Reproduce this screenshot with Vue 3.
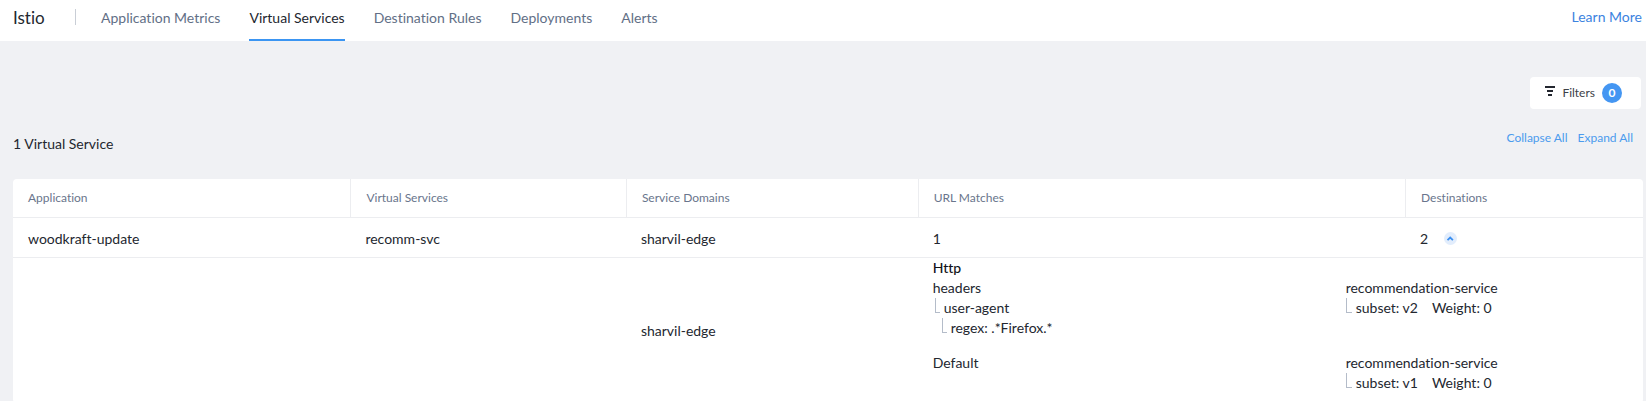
<script setup>
import { ref } from 'vue'

const tabs = ['Application Metrics', 'Virtual Services', 'Destination Rules', 'Deployments', 'Alerts']
const activeTab = ref('Virtual Services')
const columns = ['Application', 'Virtual Services', 'Service Domains', 'URL Matches', 'Destinations']
const expanded = ref(true)
const filterCount = ref(0)

const service = {
  application: 'woodkraft-update',
  name: 'recomm-svc',
  domain: 'sharvil-edge',
  matches: 1,
  destinations: 2,
}

const routes = [
  {
    protocol: 'Http',
    match: 'headers',
    children: ['user-agent', 'regex: .*Firefox.*'],
    host: 'recommendation-service',
    subset: 'v2',
    weight: 0,
  },
  {
    match: 'Default',
    children: [],
    host: 'recommendation-service',
    subset: 'v1',
    weight: 0,
  },
]
</script>

<template>
  <div class="page">
    <header class="topbar">
      <h1 class="brand">Istio</h1>
      <span class="separator"></span>
      <nav class="tabs">
        <a
          v-for="tab in tabs"
          :key="tab"
          href="#"
          class="tab"
          :class="{ active: tab === activeTab }"
          @click.prevent="activeTab = tab"
        >{{ tab }}</a>
      </nav>
      <a href="#" class="learn">Learn More</a>
    </header>

    <main class="content">
      <div class="toolbar">
        <button type="button" class="filters">
          <svg width="10" height="10" viewBox="0 0 10 10" aria-hidden="true">
            <path d="M0 1h10M2 5h6M3 9h4" stroke="#23272f" stroke-width="2" fill="none" />
          </svg>
          <span>Filters</span>
          <span class="badge">{{ filterCount }}</span>
        </button>
      </div>

      <div class="summary">
        <h2 class="count">1 Virtual Service</h2>
        <div class="actions">
          <button type="button" class="action" @click="expanded = false">Collapse All</button>
          <button type="button" class="action" @click="expanded = true">Expand All</button>
        </div>
      </div>

      <table class="services">
        <colgroup>
          <col class="col-app" />
          <col class="col-service" />
          <col class="col-domain" />
          <col class="col-match" />
          <col />
        </colgroup>
        <thead>
          <tr>
            <th v-for="column in columns" :key="column" scope="col">{{ column }}</th>
          </tr>
        </thead>
        <tbody>
          <tr class="row">
            <td>{{ service.application }}</td>
            <td>{{ service.name }}</td>
            <td>{{ service.domain }}</td>
            <td>{{ service.matches }}</td>
            <td>
              <div class="destinations">
                <span>{{ service.destinations }}</span>
                <button
                  type="button"
                  class="toggle"
                  aria-label="Toggle details"
                  :aria-expanded="expanded"
                  @click="expanded = !expanded"
                >
                  <svg width="13" height="13" viewBox="0 0 13 13" aria-hidden="true">
                    <path d="M3.5 8.2L6.2 5.6L8.9 8.2" stroke="#3b8ff0" stroke-width="1.8" fill="none" />
                  </svg>
                </button>
              </div>
            </td>
          </tr>
          <tr v-if="expanded" class="detail">
            <td></td>
            <td></td>
            <td>{{ service.domain }}</td>
            <td colspan="2">
              <div v-for="route in routes" :key="route.subset" class="route">
                <div>
                  <div v-if="route.protocol" class="protocol">{{ route.protocol }}</div>
                  <div>{{ route.match }}</div>
                  <div
                    v-for="(child, depth) in route.children"
                    :key="child"
                    class="branch"
                    :class="{ nested: depth > 0 }"
                  >{{ child }}</div>
                </div>
                <div :class="{ offset: route.protocol }">
                  <div>{{ route.host }}</div>
                  <div class="branch target">
                    <span>subset: {{ route.subset }}</span>
                    <span>Weight: {{ route.weight }}</span>
                  </div>
                </div>
              </div>
            </td>
          </tr>
        </tbody>
      </table>
    </main>
  </div>
</template>

<style>
body {
  margin: 0;
  background: #f0f1f4;
}
</style>

<style scoped>
.page {
  font-family: Lato, "Noto Sans", sans-serif;
  font-size: 14px;
  font-variant-ligatures: none;
  line-height: 20px;
  color: #23272f;
}

h1,
h2 {
  margin: 0;
  font-weight: 400;
}

a {
  text-decoration: none;
}

button {
  padding: 0;
  border: 0;
  background: none;
  font: inherit;
  font-variant-ligatures: none;
  cursor: pointer;
}

.topbar {
  display: flex;
  height: 41px;
  padding: 0 4px 0 13px;
  background: #fff;
}

.brand {
  width: 62px;
  font-size: 17px;
  line-height: 36px;
}

.separator {
  width: 1px;
  height: 16px;
  margin-top: 9px;
  background: #c9ced6;
}

.tabs {
  display: flex;
  flex: 1;
  gap: 29px;
  margin-left: 25px;
}

.tab {
  box-sizing: border-box;
  height: 41px;
  border-bottom: 2px solid transparent;
  line-height: 36px;
  color: #626f86;
}

.tab.active {
  border-color: #3b95f2;
  color: #23272f;
}

.learn {
  line-height: 34px;
  color: #3c83e0;
}

.content {
  padding: 36px 3px 0 13px;
}

.toolbar {
  display: flex;
  justify-content: flex-end;
  padding-right: 2px;
}

.filters {
  display: flex;
  align-items: center;
  height: 32px;
  padding: 0 19px 0 15px;
  border-radius: 4px;
  background: #fff;
  font-size: 12px;
  color: #3d4148;
}

.filters svg {
  margin: 0 7px 4px 0;
}

.badge {
  width: 20px;
  height: 20px;
  margin-left: 7px;
  border-radius: 50%;
  background: #4496f2;
  font-weight: 700;
  line-height: 20px;
  text-align: center;
  color: #fff;
}

.summary {
  display: flex;
  justify-content: space-between;
  height: 50px;
  padding: 20px 10px 0 0;
}

.count {
  margin-top: 5px;
  font-size: 14px;
}

.actions {
  display: flex;
  align-items: flex-start;
  gap: 10px;
}

.action {
  font-size: 12px;
  line-height: 18px;
  color: #4b9bee;
}

.services {
  width: 100%;
  table-layout: fixed;
  border-spacing: 0;
  border-radius: 4px;
  background: #fff;
}

.col-app {
  width: 20.7%;
}

.col-service {
  width: 16.9%;
}

.col-domain {
  width: 17.9%;
}

.col-match {
  width: 29.9%;
}

th {
  height: 38px;
  padding: 0 15px;
  border-bottom: 1px solid #ecedf0;
  font-size: 12px;
  font-weight: 400;
  text-align: left;
  color: #69758c;
}

th + th {
  border-left: 1px solid #ecedf0;
}

td {
  padding: 0 15px;
}

.row td {
  height: 37px;
  padding-top: 2px;
  border-bottom: 1px solid #ecedf0;
}

.destinations {
  display: flex;
  align-items: center;
  gap: 16px;
}

.toggle {
  width: 13px;
  height: 13px;
  border-radius: 50%;
  background: #e2edfc;
}

.toggle svg {
  display: block;
}

.detail td {
  padding-bottom: 10px;
}

.detail td:nth-child(3) {
  padding-bottom: 0;
}

.route {
  display: grid;
  grid-template-columns: 59.4% 1fr;
}

.route + .route {
  margin-top: 15px;
}

.protocol {
  font-weight: 500;
  color: #111318;
}

.offset {
  padding-top: 20px;
}

.branch {
  display: flex;
}

.branch::before {
  content: "";
  width: 4px;
  height: 14px;
  margin: 0 4px 0 2px;
  border: solid #b4bcc9;
  border-width: 0 0 1px 1px;
}

.nested {
  padding-left: 7px;
}

.target::before {
  width: 5px;
  margin-left: 0;
}

.target span + span {
  margin-left: 14px;
}
</style>
